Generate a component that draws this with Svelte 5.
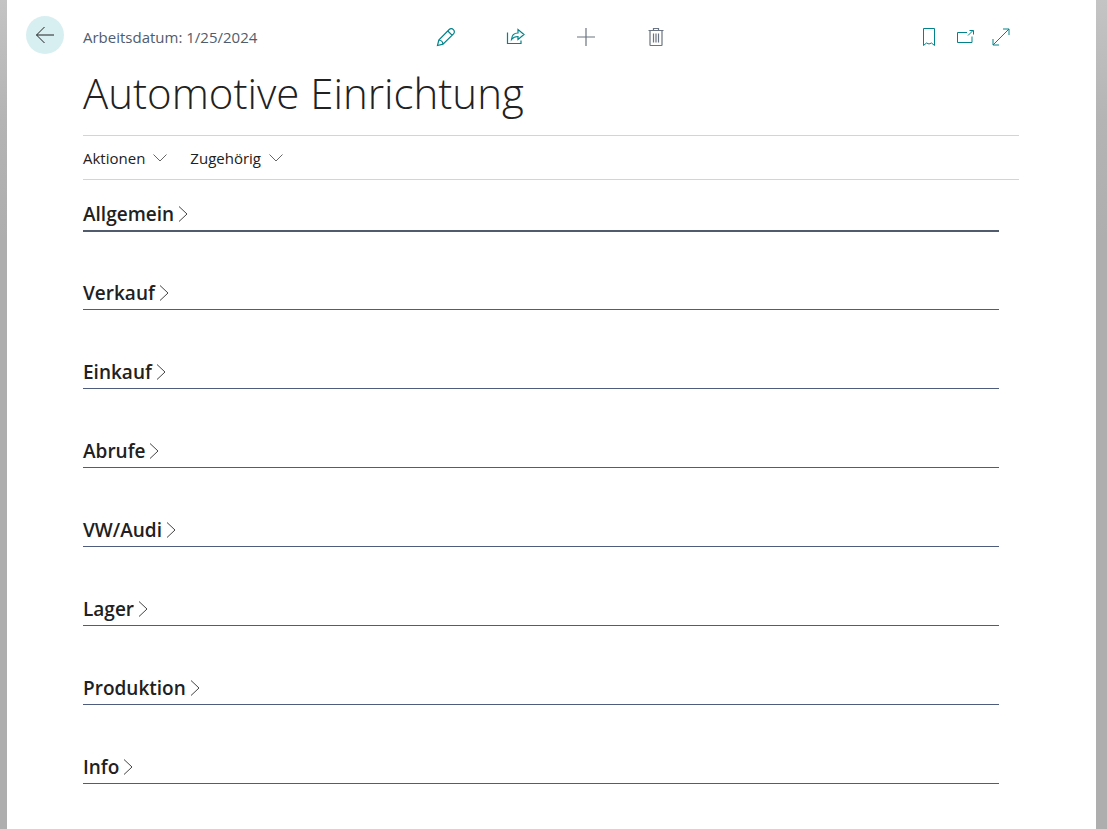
<script>
  let sections = [
    "Allgemein",
    "Verkauf",
    "Einkauf",
    "Abrufe",
    "VW/Audi",
    "Lager",
    "Produktion",
    "Info"
  ];
  let menus = ["Aktionen", "Zugehörig"];
  let current = $state("Allgemein");
</script>

<div class="backdrop">
  <main>
    <button class="back" aria-label="Zurück">
      <svg width="20" height="20" viewBox="0 0 20 20">
        <path d="M19 10H1.5M9.5 2l-8 8 8 8" />
      </svg>
    </button>

    <div class="content">
      <header>
        <span class="date">Arbeitsdatum: 1/25/2024</span>
        <div class="tools">
          <button aria-label="Bearbeiten">
            <svg width="20" height="20" viewBox="0 0 20 20">
              <path d="M1.5 18.500 2.800 13 13.200 2.500c2.700-2.700 7 1.600 4.300 4.300L7 17.200zM11.800 4l4.200 4.200M2.800 13c2.200.2 4 2 4.200 4.200" />
            </svg>
          </button>
          <button aria-label="Teilen">
            <svg width="20" height="20" viewBox="0 0 20 20">
              <path d="M1.500 5.500v11h13.500v-3M5.500 12.500c.3-4.500 3-6.500 6.500-6.500V2.500L18 7.500l-6 5V9.500c-3 0-5 1-6.500 3z" />
            </svg>
          </button>
          <button class="muted" aria-label="Neu">
            <svg width="20" height="20" viewBox="0 0 20 20">
              <path d="M10 1v18M1 10h18" />
            </svg>
          </button>
          <button class="muted" aria-label="Löschen">
            <svg width="20" height="20" viewBox="0 0 20 20">
              <path d="M2.500 3.500h15M7.500 3.500v-2h5v2M4 3.500v14.500q0 .5.500.5h11q.5 0 .5-.5V3.500M7.500 6.500v9M10 6.500v9M12.500 6.500v9" />
            </svg>
          </button>
        </div>
        <div class="window">
          <button aria-label="Lesezeichen">
            <svg width="20" height="20" viewBox="0 0 20 20">
              <path d="M4.500 1.500h11v17L12.500 16 10 17l-2.500-1-3 2.500z" />
            </svg>
          </button>
          <button aria-label="In neuem Fenster öffnen">
            <svg width="20" height="20" viewBox="0 0 20 20">
              <path d="M12 5.500H2.500v10h14.500v-6M13 8.500l5-5M14.500 3.500h4v4" />
            </svg>
          </button>
          <button aria-label="Maximieren">
            <svg width="20" height="20" viewBox="0 0 20 20">
              <path d="m2 18 16-16M12 2h6v6M2 12v6h6" />
            </svg>
          </button>
        </div>
      </header>

      <h1>Automotive Einrichtung</h1>

      <nav>
        {#each menus as menu}
          <button>
            {menu}
            <svg width="14" height="8" viewBox="0 0 14 8">
              <path d="m.5.5 6.500 6.500L13.500.5" />
            </svg>
          </button>
        {/each}
      </nav>

      <div class="sections">
        {#each sections as section}
          <h2 class:current={current === section}>
            <button onclick={() => (current = section)}>
              {section}
              <svg width="10" height="16" viewBox="0 0 10 16">
                <path d="m1 .5 8 7.500-8 7.500" />
              </svg>
            </button>
          </h2>
        {/each}
      </div>
    </div>
  </main>
</div>

<style>
  :global(body) {
    margin: 0;
  }
  .backdrop {
    min-height: 100vh;
    box-sizing: border-box;
    display: flex;
    padding: 0 11px 0 7px;
    background: linear-gradient(#c4c4c4, #b4b4b4 120px, #aeaeae 240px);
    font-family: "Segoe UI", "Open Sans", "Noto Sans", sans-serif;
    color: #212121;
  }
  main {
    flex: 1;
    display: flex;
    align-items: flex-start;
    gap: 19px;
    padding: 16px 77px 20px 19px;
    background: #fff;
  }
  button {
    display: flex;
    align-items: center;
    justify-content: center;
    padding: 0;
    border: 0;
    background: none;
    color: inherit;
    font: inherit;
    cursor: pointer;
  }
  svg {
    flex: none;
    fill: none;
    stroke: currentColor;
  }
  .back {
    flex: none;
    width: 38px;
    height: 38px;
    border-radius: 50%;
    background: #d8eff1;
  }
  .content {
    flex: 1;
  }
  header {
    display: grid;
    grid-template-columns: 1fr auto 1fr;
    align-items: center;
    height: 42px;
  }
  .date {
    color: #505c6d;
    font-size: 15px;
  }
  .tools,
  .window {
    display: flex;
    color: #00838a;
  }
  .tools button {
    width: 70px;
    height: 36px;
  }
  .tools svg {
    stroke-width: 1.2;
  }
  .window {
    justify-content: flex-end;
  }
  .window button {
    width: 36px;
    height: 36px;
  }
  .tools .muted {
    color: #6b7482;
  }
  h1 {
    margin: 0;
    height: 77px;
    font-size: 42px;
    font-weight: 300;
    line-height: 69px;
  }
  nav {
    display: flex;
    gap: 23px;
    height: 43px;
    border-top: 1px solid #d4d4d4;
    border-bottom: 1px solid #d4d4d4;
    font-size: 15px;
  }
  nav button {
    gap: 8px;
  }
  nav svg {
    color: #666;
  }
  .sections {
    display: flex;
    flex-direction: column;
    gap: 48px;
    padding: 20px 20px 0 0;
  }
  h2 {
    box-sizing: border-box;
    height: 31px;
    margin: 0;
    border-bottom: 1px solid #505c7d;
    font-size: 19px;
    font-weight: 600;
    line-height: 28px;
  }
  h2 button {
    gap: 4px;
  }
  h2 svg {
    color: #444;
  }
  h2.current {
    height: 32px;
    margin-bottom: -1px;
    border-bottom: 2px solid #505c6d;
  }
</style>
